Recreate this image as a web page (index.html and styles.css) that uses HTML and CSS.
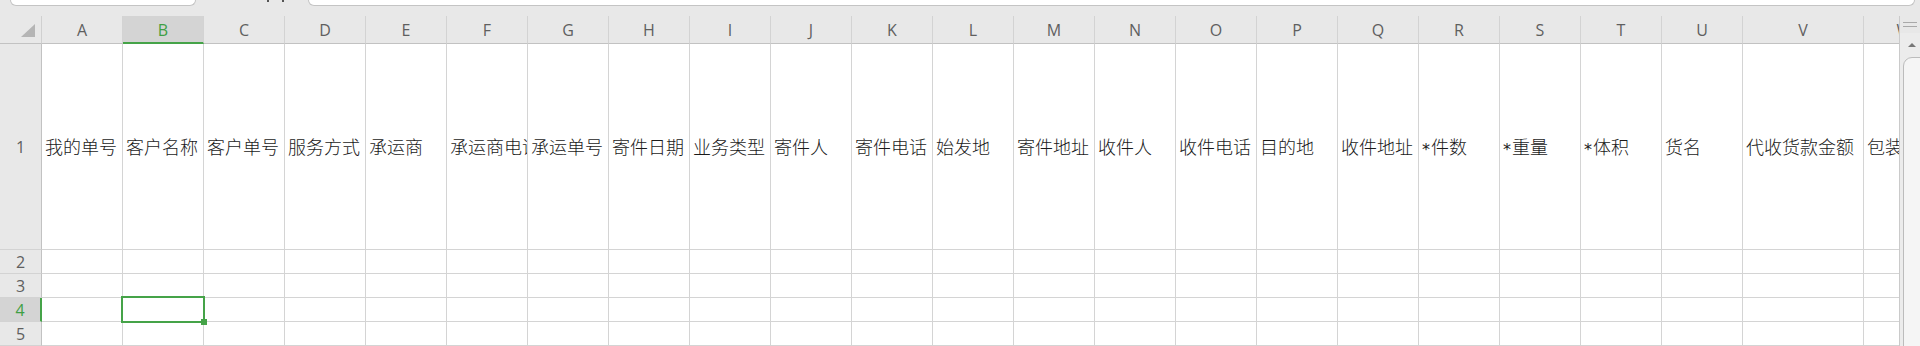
FILE: index.html
```html
<!DOCTYPE html>
<html lang="zh-CN">
<head>
<meta charset="utf-8">
<title>Sheet</title>
<link rel="stylesheet" href="styles.css">
</head>
<body>
<div class="app">
  <div class="topbar">
    <div class="namebox"></div>
    <div class="fx"><span class="fx-a"></span><span class="fx-b"></span></div>
    <div class="formulabox"></div>
  </div>
  <div class="main">
    <div class="sheet">
      <div class="grid">
        <div class="corner"><svg width="14" height="13" viewBox="0 0 14 13"><polygon points="14,0 14,13 0,13" fill="#b5b5b5"/></svg></div>
        <div class="ch">A</div><div class="ch sel">B</div><div class="ch">C</div><div class="ch">D</div><div class="ch">E</div><div class="ch">F</div><div class="ch">G</div><div class="ch">H</div><div class="ch">I</div><div class="ch">J</div><div class="ch">K</div><div class="ch">L</div><div class="ch">M</div><div class="ch">N</div><div class="ch">O</div><div class="ch">P</div><div class="ch">Q</div><div class="ch">R</div><div class="ch">S</div><div class="ch">T</div><div class="ch">U</div><div class="ch">V</div><div class="ch">W</div>

        <div class="rh">1</div>
        <div class="c t">我的单号</div><div class="c t">客户名称</div><div class="c t">客户单号</div><div class="c t">服务方式</div><div class="c t">承运商</div><div class="c t">承运商电话</div><div class="c t">承运单号</div><div class="c t">寄件日期</div><div class="c t">业务类型</div><div class="c t">寄件人</div><div class="c t">寄件电话</div><div class="c t">始发地</div><div class="c t">寄件地址</div><div class="c t">收件人</div><div class="c t">收件电话</div><div class="c t">目的地</div><div class="c t">收件地址</div><div class="c t"><span class="ast">*</span>件数</div><div class="c t"><span class="ast">*</span>重量</div><div class="c t"><span class="ast">*</span>体积</div><div class="c t">货名</div><div class="c t">代收货款金额</div><div class="c t">包装</div>

        <div class="rh">2</div>
        <div class="c"></div><div class="c"></div><div class="c"></div><div class="c"></div><div class="c"></div><div class="c"></div><div class="c"></div><div class="c"></div><div class="c"></div><div class="c"></div><div class="c"></div><div class="c"></div><div class="c"></div><div class="c"></div><div class="c"></div><div class="c"></div><div class="c"></div><div class="c"></div><div class="c"></div><div class="c"></div><div class="c"></div><div class="c"></div><div class="c"></div>

        <div class="rh">3</div>
        <div class="c"></div><div class="c"></div><div class="c"></div><div class="c"></div><div class="c"></div><div class="c"></div><div class="c"></div><div class="c"></div><div class="c"></div><div class="c"></div><div class="c"></div><div class="c"></div><div class="c"></div><div class="c"></div><div class="c"></div><div class="c"></div><div class="c"></div><div class="c"></div><div class="c"></div><div class="c"></div><div class="c"></div><div class="c"></div><div class="c"></div>

        <div class="rh sel">4</div>
        <div class="c"></div><div class="c active"><span class="cursor"><span class="handle"></span></span></div><div class="c"></div><div class="c"></div><div class="c"></div><div class="c"></div><div class="c"></div><div class="c"></div><div class="c"></div><div class="c"></div><div class="c"></div><div class="c"></div><div class="c"></div><div class="c"></div><div class="c"></div><div class="c"></div><div class="c"></div><div class="c"></div><div class="c"></div><div class="c"></div><div class="c"></div><div class="c"></div><div class="c"></div>

        <div class="rh">5</div>
        <div class="c"></div><div class="c"></div><div class="c"></div><div class="c"></div><div class="c"></div><div class="c"></div><div class="c"></div><div class="c"></div><div class="c"></div><div class="c"></div><div class="c"></div><div class="c"></div><div class="c"></div><div class="c"></div><div class="c"></div><div class="c"></div><div class="c"></div><div class="c"></div><div class="c"></div><div class="c"></div><div class="c"></div><div class="c"></div><div class="c"></div>
      </div>
    </div>
    <div class="vscroll">
      <div class="vs-split"><span class="bar"></span><span class="bar"></span></div>
      <div class="vs-track">
        <div class="vs-up"></div>
        <div class="vs-thumb"></div>
      </div>
    </div>
  </div>
</div>
</body>
</html>
```

FILE: styles.css
```css
* { box-sizing: border-box; }
html, body { margin: 0; padding: 0; }
body {
  width: 1920px;
  height: 346px;
  overflow: hidden;
  background: #e8e8e8;
  font-family: "Open Sans", "Noto Sans", sans-serif;
}
.app { display: flex; flex-direction: column; height: 346px; }

.topbar {
  height: 16px;
  display: flex;
  align-items: flex-start;
  background: #e8e8e8;
}
.namebox {
  margin-left: 10px;
  width: 186px;
  height: 6px;
  background: #fff;
  border: 1px solid #c4c4c4;
  border-top: none;
  border-radius: 0 0 6px 6px;
}
.fx {
  width: 112px;
  height: 6px;
  position: relative;
}
.fx-a, .fx-b {
  position: absolute;
  top: 0;
  width: 2px;
  height: 2px;
  background: #555;
}
.fx-a { left: 71px; }
.fx-b { left: 86px; }
.formulabox {
  flex: 1;
  margin-right: 5px;
  height: 6px;
  background: #fff;
  border: 1px solid #c4c4c4;
  border-top: none;
  border-radius: 0 0 6px 6px;
}

.main { flex: 1; display: flex; min-height: 0; }
.sheet { width: 1899px; overflow: hidden; background: #fff; }
.grid {
  display: grid;
  grid-template-columns: 42px repeat(21, 81px) 121px 81px;
  grid-template-rows: 28px 206px 24px 24px 24px 24px;
  width: max-content;
}

.corner {
  background: #e8e8e8;
  border-right: 1px solid #d0d0d0;
  border-bottom: 1px solid #c2c2c2;
  padding: 8px 0 0 21px;
  display: flex;
  align-items: flex-start;
}
.ch {
  background: #e8e8e8;
  border-right: 1px solid #d3d3d3;
  border-bottom: 1px solid #c2c2c2;
  display: flex;
  align-items: center;
  justify-content: center;
  font-size: 16px;
  color: #5f5f5f;
  padding-top: 1px;
}
.ch.sel {
  background: #d4d4d4;
  color: #3f9f44;
  border-bottom: 2px solid #45a348;
  padding-top: 2px;
}
.rh {
  background: #e8e8e8;
  border-right: 1px solid #c2c2c2;
  border-bottom: 1px solid #d3d3d3;
  display: flex;
  align-items: center;
  justify-content: center;
  font-size: 16px;
  color: #5f5f5f;
}
.rh.sel {
  background: #d4d4d4;
  color: #3f9f44;
  border-right: 2px solid #45a348;
}

.c {
  background: #fff;
  border-right: 1px solid #d4d4d4;
  border-bottom: 1px solid #d4d4d4;
  position: relative;
}
.c.t {
  display: block;
  line-height: 205px;
  padding-left: 3px;
  overflow: hidden;
  white-space: nowrap;
  font-family: "Noto Sans CJK SC", "Noto Sans", sans-serif;
  font-size: 18px;
  font-weight: 300;
  color: #1a1a1a;
}
.ast {
  display: inline-block;
  width: 9px;
  font-family: "DejaVu Sans", sans-serif;
  font-weight: 400;
  font-size: 16px;
  vertical-align: -1px;
  line-height: 1;
}

.cursor {
  position: absolute;
  left: -2px;
  top: -2px;
  width: 84px;
  height: 27px;
  border: 2px solid #45a348;
  z-index: 2;
}
.handle {
  position: absolute;
  right: -4px;
  bottom: -4px;
  width: 6px;
  height: 6px;
  background: #45a348;
}

.vscroll {
  width: 21px;
  display: flex;
  flex-direction: column;
  border-left: 1px solid #cacaca;
  background: #e8e8e8;
  overflow: hidden;
}
.vs-split {
  height: 17px;
  display: flex;
  flex-direction: column;
  justify-content: center;
  gap: 3px;
  padding: 0 3px 0 3px;
}
.vs-split .bar { height: 1px; background: #a9a9a9; display: block; }
.vs-track {
  flex: 1;
  background: #ececec;
  position: relative;
  padding-left: 3px;
  display: flex;
  flex-direction: column;
}
.vs-up {
  margin: 10px 0 0 5px;
  width: 0;
  height: 0;
  border-left: 4px solid transparent;
  border-right: 4px solid transparent;
  border-bottom: 4px solid #777;
}
.vs-thumb {
  margin-top: 10px;
  flex: 1;
  margin-bottom: -20px;
  margin-right: -10px;
  background: #f5f5f5;
  border: 1px solid #bcbcbc;
  border-radius: 9px;
}
```
